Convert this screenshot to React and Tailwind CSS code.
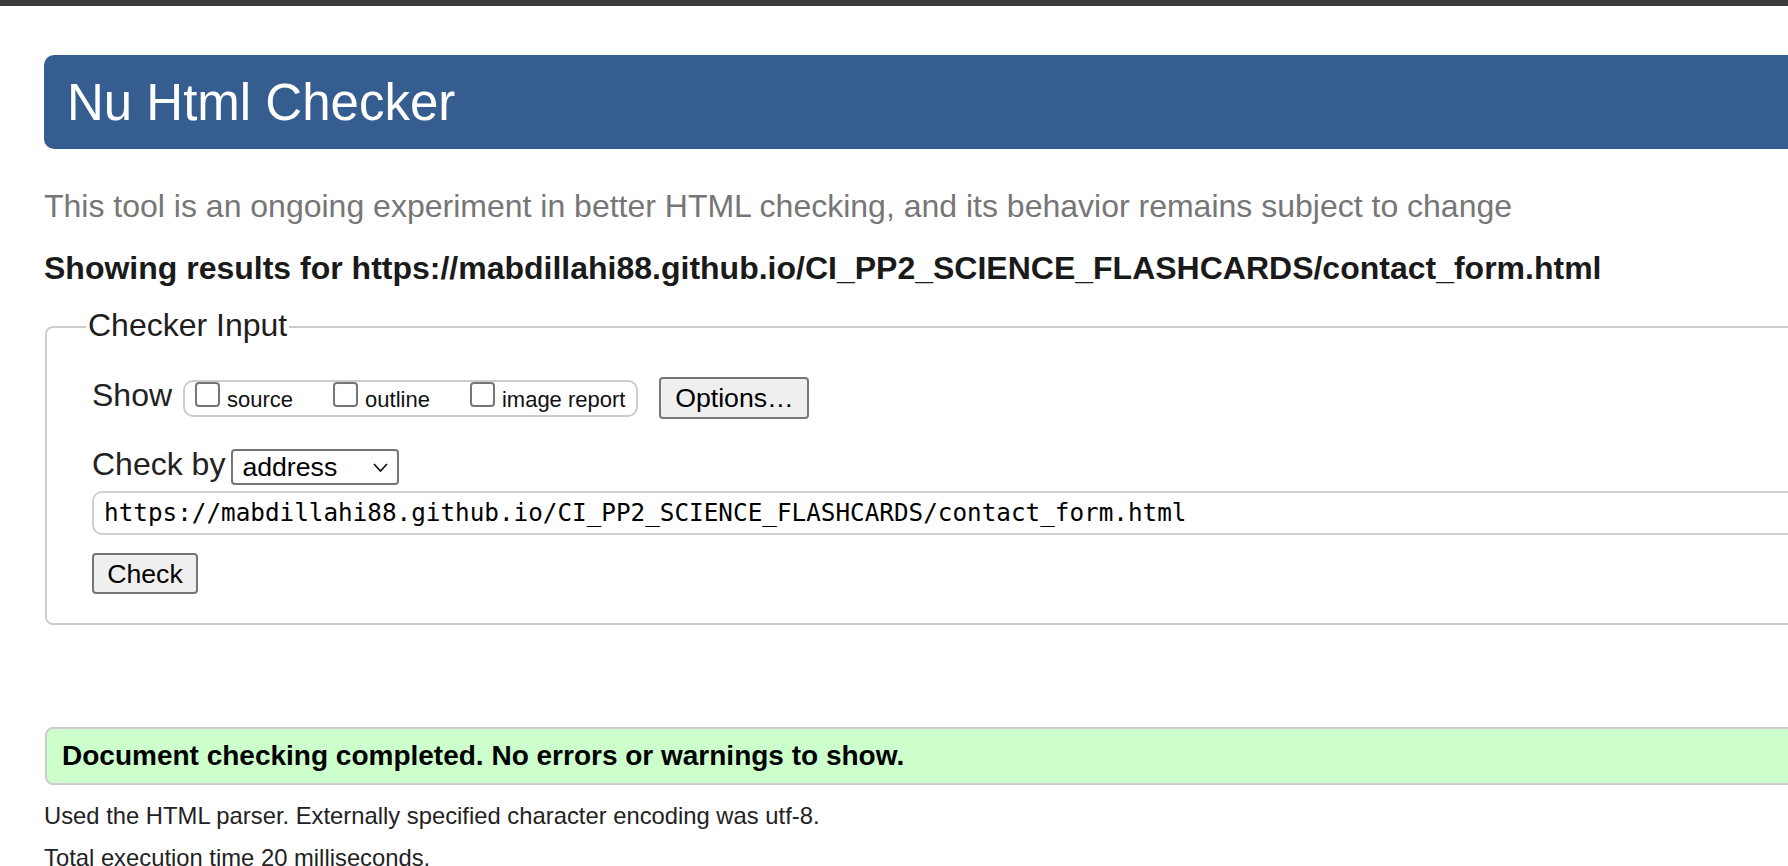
import React from "react";

const url = "https://mabdillahi88.github.io/CI_PP2_SCIENCE_FLASHCARDS/contact_form.html";

function Box({ label }) {
  return (
    <div className="flex items-end">
      <div className="w-[25px] h-[25px] border-2 border-[#767676] rounded-[4px] bg-white" />
      <span className="ml-[7px] text-[22px] leading-[14px] text-[#111]">{label}</span>
    </div>
  );
}

export default function App() {
  return (
    <div className="w-screen h-screen overflow-hidden bg-white text-[#222] font-['Liberation_Sans',Arial,sans-serif]">
      <div className="h-[6px] bg-[#3c3c3c]" />
      <div className="w-[2400px] pl-[44px]">
        <h1 className="mt-[49px] h-[94px] rounded-[10px] bg-[#365d8f] flex items-center pl-[23px] text-[51px] leading-none text-white font-normal">
          Nu Html Checker
        </h1>

        <p className="mt-[37px] text-[32px] leading-[40px] text-[#767676]">
          This tool is an ongoing experiment in better HTML checking, and its behavior remains subject to change
        </p>
        <h2 className="mt-[22px] text-[32px] leading-[40px] font-bold text-[#1a1a1a]">
          Showing results for {url}
        </h2>

        <fieldset className="mt-[19px] ml-px border-2 border-[#cccccc] rounded-[8px] px-[39px] pb-[29px]">
          <legend className="px-[2px] pb-[4px] text-[32px] leading-[36px] text-[#1d1d1d]">Checker Input</legend>
          <div className="pl-[6px]">
            <div className="mt-[30px] flex items-center h-[42px]">
              <span className="text-[32px] leading-[36px] mb-[6px]">Show</span>
              <div className="ml-[11px] h-[37px] flex items-start gap-[40px] border-2 border-[#cccccc] rounded-[10px] pl-[10px] pr-[11px]">
                <Box label="source" />
                <Box label="outline" />
                <Box label="image report" />
              </div>
              <button
                type="button"
                className="ml-[21px] w-[150px] h-[42px] flex items-center justify-center border-2 border-[#767676] rounded-[4px] bg-[#efefef] text-[26.67px] text-black"
              >
                Options…
              </button>
            </div>

            <div className="mt-[30px] flex items-center h-[36px]">
              <span className="text-[32px] leading-[36px] mb-[6px]">Check by</span>
              <div className="ml-[6px] w-[168px] h-[36px] flex items-center justify-between border-2 border-[#767676] rounded-[4px] pl-[9px] pr-[9px] text-[26.67px] text-black">
                <span>address</span>
                <svg width="15" height="9" viewBox="0 0 15 9" fill="none">
                  <polyline points="1,1 7.5,8 14,1" stroke="#111" strokeWidth="1.7" />
                </svg>
              </div>
            </div>

            <div className="mt-[6px] h-[44px] flex items-center border-2 border-[#d0d0d0] rounded-[10px] pl-[10px] text-[24.3px] text-black font-['DejaVu_Sans_Mono',monospace]">
              {url}
            </div>

            <button
              type="button"
              className="mt-[18px] w-[106px] h-[41px] flex items-center justify-center border-2 border-[#767676] rounded-[4px] bg-[#efefef] text-[26.67px] text-black"
            >
              Check
            </button>
          </div>
        </fieldset>

        <div className="mt-[102px] ml-px h-[58px] flex items-center border-2 border-[#cccccc] rounded-[8px] bg-[#ccffcc] pl-[15px] text-[28px] font-bold text-black">
          Document checking completed. No errors or warnings to show.
        </div>

        <p className="mt-[10px] text-[23.8px] leading-[42px] text-[#222]">
          Used the HTML parser. Externally specified character encoding was utf-8.
        </p>
        <p className="text-[23.8px] leading-[42px] text-[#222]">Total execution time 20 milliseconds.</p>
      </div>
    </div>
  );
}
